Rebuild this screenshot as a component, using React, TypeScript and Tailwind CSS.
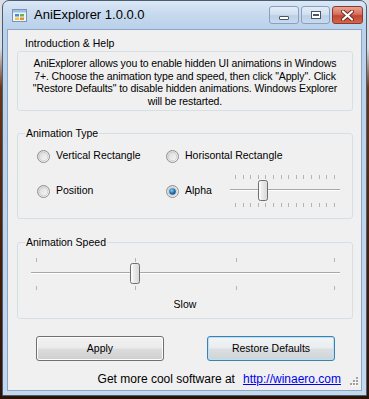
import React from 'react';

const Radio = ({ checked = false }: { checked?: boolean }) => (
  <svg width="13" height="13" viewBox="0 0 13 13" className="shrink-0">
    <defs>
      <linearGradient id="rb" x1="0" y1="0" x2="1" y2="1">
        <stop offset="0" stopColor="#d4d4d4" />
        <stop offset="1" stopColor="#fdfdfd" />
      </linearGradient>
      <radialGradient id="rd" cx="0.4" cy="0.35" r="0.7">
        <stop offset="0" stopColor="#8fd0f5" />
        <stop offset="0.5" stopColor="#2a7fc0" />
        <stop offset="1" stopColor="#0d3f6e" />
      </radialGradient>
    </defs>
    <circle cx="6.5" cy="6.5" r="6" fill="url(#rb)" stroke="#8e8f8f" />
    <circle cx="6.5" cy="6.5" r="4.3" fill="none" stroke="#c8c8c8" strokeWidth="0.8" />
    {checked && <circle cx="6.5" cy="6.5" r="3.3" fill="url(#rd)" />}
  </svg>
);

// trackbar drawn as svg: ticks above and below, groove, and thumb
const TrackBar = ({ width, ticks, thumbX }: { width: number; ticks: number[]; thumbX: number }) => (
  <svg width={width} height="36" viewBox={`0 0 ${width} 36`} className="block">
    <defs>
      <linearGradient id="th" x1="0" y1="0" x2="1" y2="0">
        <stop offset="0" stopColor="#f7f7f7" />
        <stop offset="1" stopColor="#d8d8d8" />
      </linearGradient>
    </defs>
    {ticks.map((t, i) => (
      <g key={i} stroke="#b4b4b4" strokeWidth="1">
        <line x1={t + 0.5} y1="2" x2={t + 0.5} y2="6" />
        <line x1={t + 0.5} y1="30" x2={t + 0.5} y2="34" />
      </g>
    ))}
    <line x1="0" y1="16.5" x2={width} y2="16.5" stroke="#a8a8a8" />
    <line x1="0" y1="17.5" x2={width} y2="17.5" stroke="#ffffff" />
    <rect x={thumbX + 0.5} y="7.5" width="9" height="20" rx="2" fill="url(#th)" stroke="#6f6f6f" />
    <line x1={thumbX + 2} y1="9.5" x2={thumbX + 2} y2="25.5" stroke="#ffffff" />
  </svg>
);

const alphaTicks = Array.from({ length: 14 }, (_, i) => Math.round(5 + i * 7.6));

export default function App() {
  return (
    <div className="w-[369px] h-[399px] overflow-hidden bg-[linear-gradient(180deg,#d9dee5_0%,#d9dee5_12%,#6b3517_22%,#4a200c_60%,#2d1307_100%)] font-['Liberation_Sans',Arial,sans-serif] text-[10.5px] text-black">
      <div className="ml-[2px] w-[365px] h-[396px] rounded-t-[7px] border border-[#4d5d70] bg-[linear-gradient(180deg,#dbe7f6_0px,#c6d9ee_14px,#b9d1ea_28px,#c4d8ee_100%)] flex flex-col px-[4px] pb-[4px]">
        {/* title bar */}
        <div className="h-[28px] flex items-center shrink-0">
          <svg width="15" height="13" viewBox="0 0 15 13" className="ml-[5px] mt-[1px]">
            <rect x="0.5" y="0.5" width="14" height="12" fill="#eef3f9" stroke="#7b93b3" />
            <rect x="1" y="1" width="13" height="2.5" fill="#9fc0e6" />
            <rect x="3" y="5" width="4" height="2.5" fill="#4a8bd8" />
            <rect x="8" y="5" width="4" height="2.5" fill="#5cb84a" />
            <rect x="3" y="8.5" width="4" height="2.5" fill="#f3c63a" />
            <rect x="8" y="8.5" width="4" height="2.5" fill="#ee8a2e" />
          </svg>
          <span className="ml-[7px] text-[13px]">AniExplorer 1.0.0.0</span>
          <div className="ml-auto mr-[-1px] flex items-start self-start mt-[5px] gap-[2px]">
            <div className="w-[30px] h-[18px] rounded-[3px] border border-[#8aa0bc] bg-[linear-gradient(180deg,#e3ecf7_0%,#d2e0f0_45%,#bcd0e8_55%,#c8daee_100%)] flex items-end justify-center pb-[3px]">
              <div className="w-[10px] h-[4px] rounded-[1px] border border-[#4b5563] bg-white" />
            </div>
            <div className="w-[29px] h-[18px] rounded-[3px] border border-[#8aa0bc] bg-[linear-gradient(180deg,#e3ecf7_0%,#d2e0f0_45%,#bcd0e8_55%,#c8daee_100%)] flex items-center justify-center">
              <div className="w-[10px] h-[8px] border border-[#4b5563] bg-white flex items-center justify-center">
                <div className="w-[6px] h-[2px] border border-[#4b5563]" />
              </div>
            </div>
            <div className="w-[31px] h-[18px] rounded-[3px] border border-[#8a3a2c] bg-[linear-gradient(180deg,#e8a493_0%,#d6705c_45%,#c2462f_55%,#d2664d_100%)] flex items-center justify-center">
              <svg width="13" height="11" viewBox="0 0 13 11">
                <path d="M2 1.5 L11 9.5 M11 1.5 L2 9.5" stroke="#6b2a20" strokeWidth="4" strokeLinecap="round" />
                <path d="M2 1.5 L11 9.5 M11 1.5 L2 9.5" stroke="#ffffff" strokeWidth="2.2" strokeLinecap="round" />
              </svg>
            </div>
          </div>
        </div>

        {/* client area */}
        <div className="flex-1 border border-[#8ea6c6] bg-[#f0f0f0] pl-[9px] pr-[8px] relative">
          {/* Introduction */}
          <div className="mt-[6px] ml-[8px] leading-[15px]">Introduction &amp; Help</div>
          <div className="h-[60px] rounded-[3px] border border-[#d5dfe5] pt-[5px] text-center leading-[12.5px] tracking-[-0.12px] whitespace-nowrap">
            AniExplorer allows you to enable hidden UI animations in Windows<br />
            7+. Choose the animation type and speed, then click "Apply". Click<br />
            "Restore Defaults" to disable hidden animations. Windows Explorer<br />
            will be restarted.
          </div>

          {/* Animation Type */}
          <div className="mt-[22px] h-[86px] rounded-[3px] border border-[#d5dfe5] relative">
            <span className="absolute left-[7px] top-[-8px] px-[1px] bg-[#f0f0f0] leading-[15px]">Animation Type</span>
            <div className="pt-[12px] pl-[19px] flex items-center h-[32px]">
              <div className="w-[129px] flex items-center gap-[6px]">
                <Radio />
                <span>Vertical Rectangle</span>
              </div>
              <div className="flex items-center gap-[6px]">
                <Radio />
                <span>Horisontal Rectangle</span>
              </div>
            </div>
            <div className="mt-[7px] pl-[19px] flex items-center h-[36px]">
              <div className="w-[129px] flex items-center gap-[6px]">
                <Radio />
                <span>Position</span>
              </div>
              <div className="w-[64px] flex items-center gap-[6px]">
                <Radio checked />
                <span>Alpha</span>
              </div>
              <TrackBar width={110} ticks={alphaTicks} thumbX={28} />
            </div>
          </div>

          {/* Animation Speed */}
          <div className="mt-[23px] h-[77px] rounded-[3px] border border-[#d5dfe5] relative">
            <span className="absolute left-[7px] top-[-8px] px-[1px] bg-[#f0f0f0] leading-[15px]">Animation Speed</span>
            <div className="mt-[13px] ml-[13px]">
              <TrackBar width={309} ticks={[5, 104, 205, 303]} thumbX={99} />
            </div>
            <div className="mt-[5px] text-center leading-[15px]">Slow</div>
          </div>

          {/* buttons */}
          <div className="mt-[17px] ml-[19px] flex gap-[43px]">
            <button className="w-[128px] h-[25px] rounded-[3px] border border-[#707070] bg-[linear-gradient(180deg,#f2f2f2_0%,#ebebeb_48%,#dddddd_52%,#cfcfcf_100%)] shadow-[inset_0_0_0_1px_#fcfcfc]">
              Apply
            </button>
            <button className="w-[128px] h-[25px] rounded-[3px] border border-[#3c7fb1] bg-[linear-gradient(180deg,#f2f4f5_0%,#eaedef_48%,#dbdfe1_52%,#cfd4d7_100%)] shadow-[inset_0_0_0_1px_#b6e3f8]">
              Restore Defaults
            </button>
          </div>

          {/* footer */}
          <div className="mt-[11px] pr-[12px] flex justify-end gap-[8px] leading-[15px] text-[12px]">
            <span>Get more cool software at</span>
            <span className="text-[#0000ee] underline">http://winaero.com</span>
          </div>

          {/* size grip */}
          <svg width="10" height="10" viewBox="0 0 10 10" className="absolute right-[3px] bottom-[3px]">
            {[[8, 0], [5, 3], [8, 3], [2, 6], [5, 6], [8, 6]].map(([x, y], i) => (
              <g key={i}>
                <rect x={x + 1} y={y + 1} width="2" height="2" fill="#ffffff" />
                <rect x={x} y={y} width="2" height="2" fill="#a0a0a0" />
              </g>
            ))}
          </svg>
        </div>
      </div>
    </div>
  );
}
